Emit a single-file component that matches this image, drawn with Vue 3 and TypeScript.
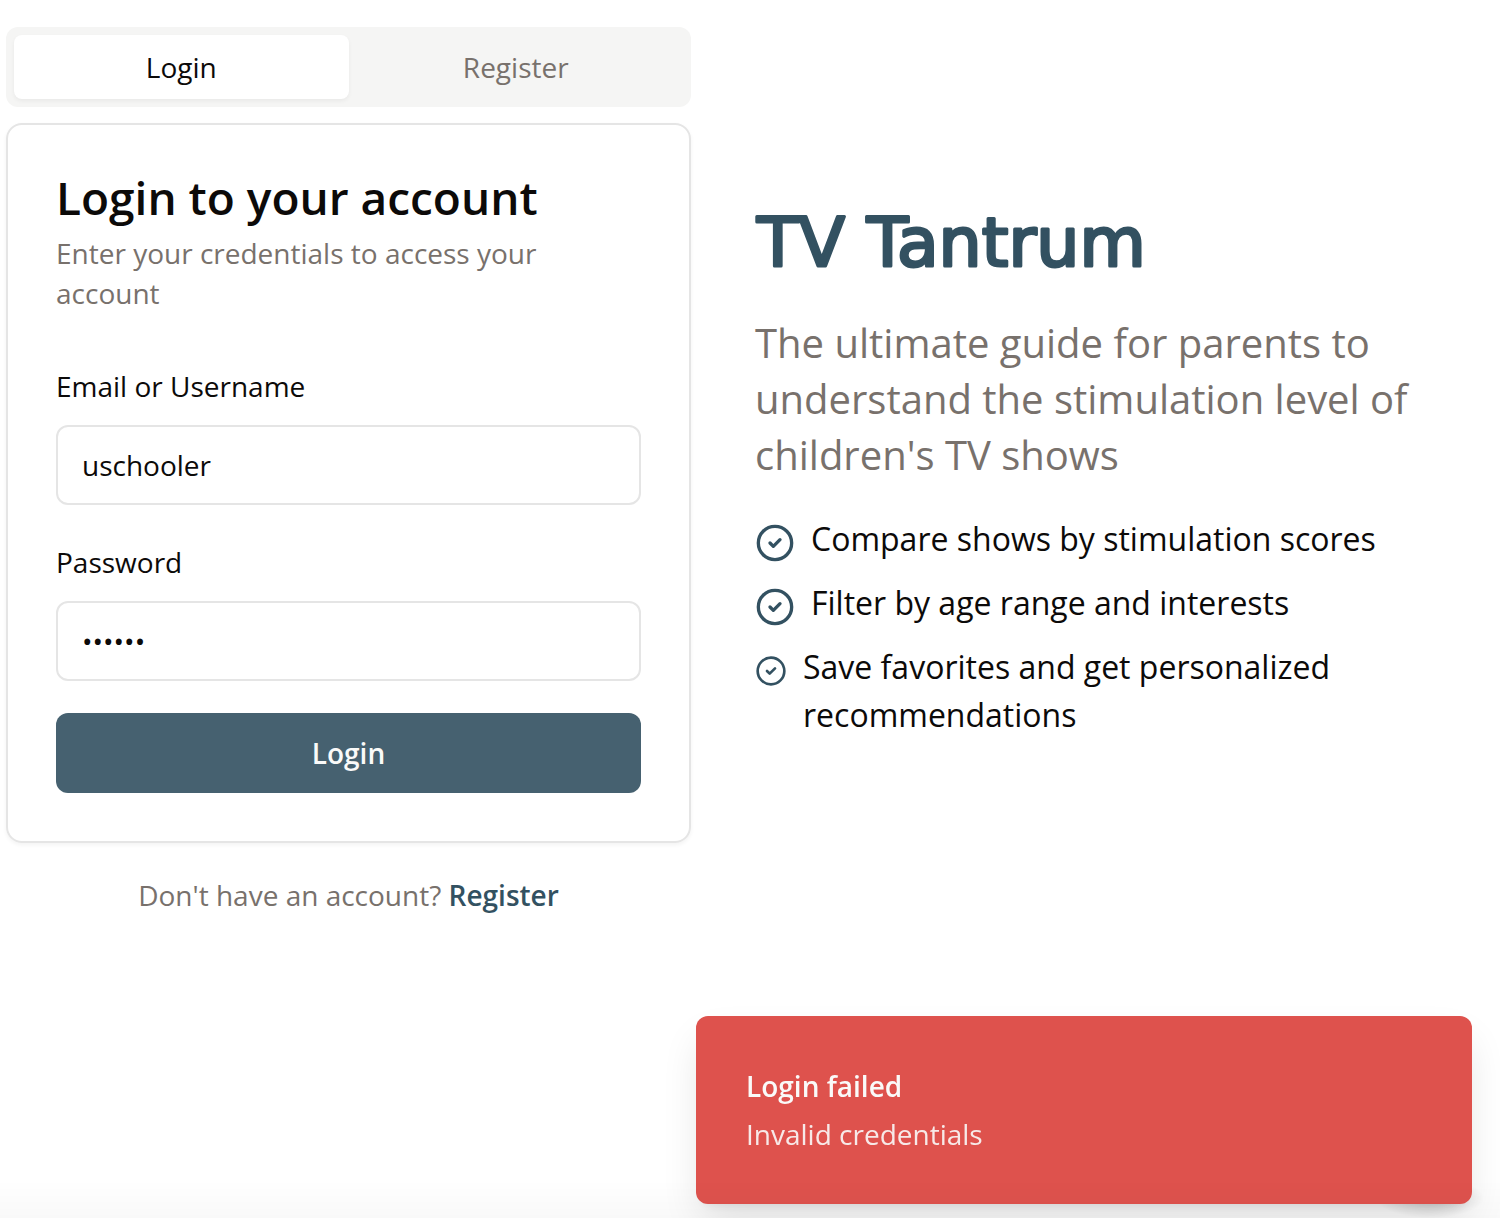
<script setup lang="ts">
import { ref } from 'vue'

type Mode = 'login' | 'register'

interface Feature {
  text: string
  compact: boolean
}

const mode = ref<Mode>('login')
const username = ref('uschooler')
const password = ref('secret')

const tabs: { id: Mode; label: string }[] = [
  { id: 'login', label: 'Login' },
  { id: 'register', label: 'Register' },
]

const features: Feature[] = [
  { text: 'Compare shows by stimulation scores', compact: false },
  { text: 'Filter by age range and interests', compact: false },
  { text: 'Save favorites and get personalized recommendations', compact: true },
]
</script>

<template>
  <main class="page">
    <section class="auth">
      <div class="tabs" role="tablist">
        <button
          v-for="tab in tabs"
          :key="tab.id"
          type="button"
          role="tab"
          class="tab"
          :class="{ active: mode === tab.id }"
          :aria-selected="mode === tab.id"
          @click="mode = tab.id"
        >
          {{ tab.label }}
        </button>
      </div>

      <div class="card">
        <header class="card-header">
          <h2 class="card-title">Login to your account</h2>
          <p class="card-description">Enter your credentials to access your account</p>
        </header>
        <form class="form" @submit.prevent>
          <div class="field">
            <label for="username">Email or Username</label>
            <input id="username" v-model="username" type="text" autocomplete="username" />
          </div>
          <div class="field">
            <label for="password">Password</label>
            <input id="password" v-model="password" type="password" autocomplete="current-password" />
          </div>
          <button type="submit" class="submit">Login</button>
        </form>
      </div>

      <p class="switch">
        Don't have an account?
        <a href="#register" @click.prevent="mode = 'register'">Register</a>
      </p>
    </section>

    <section class="hero">
      <h1 class="brand">
        <svg class="wordmark" height="72"><text x="2" y="59">TV Tantrum</text></svg>
      </h1>
      <p class="tagline">
        The ultimate guide for parents to understand the stimulation level of children's TV shows
      </p>
      <ul class="features">
        <li v-for="feature in features" :key="feature.text">
          <svg
            class="check"
            :class="{ compact: feature.compact }"
            viewBox="0 0 24 24"
            fill="none"
            stroke="currentColor"
            stroke-width="2"
            stroke-linecap="round"
            stroke-linejoin="round"
            aria-hidden="true"
          >
            <circle cx="12" cy="12" r="10" />
            <path d="m9 12 2 2 4-4" />
          </svg>
          <span>{{ feature.text }}</span>
        </li>
      </ul>
    </section>
  </main>

  <div class="corner-shade" aria-hidden="true"></div>
  <div class="toast" role="alert">
    <div class="toast-title">Login failed</div>
    <div class="toast-text">Invalid credentials</div>
  </div>
  <div class="bottom-shade" aria-hidden="true"></div>
</template>

<style>
body {
  margin: 0;
  background: #fff;
}
</style>

<style scoped>
* {
  box-sizing: border-box;
}

.page {
  display: grid;
  grid-template-columns: 1fr 1fr;
  gap: 64px;
  padding: 27px 60px 27px 6px;
  color: #0c0a09;
  font-family: "Open Sans", sans-serif;
  font-size: 28px;
  line-height: 40px;
}

h1,
h2,
p,
ul {
  margin: 0;
  padding: 0;
}

button,
input {
  font: inherit;
  color: inherit;
}

.tabs {
  display: grid;
  grid-template-columns: 1fr 1fr;
  padding: 8px;
  border-radius: 12px;
  background: #f5f5f4;
}

.tab {
  height: 64px;
  padding: 0;
  border: 0;
  border-radius: 8px;
  background: none;
  color: #78716c;
}

.tab.active {
  background: #fff;
  color: #0c0a09;
  box-shadow: 0 2px 4px rgba(0, 0, 0, 0.05);
}

.card {
  margin-top: 16px;
  padding: 48px;
  border: 2px solid #e5e5e5;
  border-radius: 16px;
  box-shadow: 0 2px 4px rgba(0, 0, 0, 0.05);
}

.card-header {
  display: flex;
  flex-direction: column;
  gap: 12px;
  margin-bottom: 48px;
}

.card-title {
  font-size: 46px;
  line-height: 48px;
  font-weight: 600;
}

.card-description {
  color: #78716c;
}

.form {
  display: flex;
  flex-direction: column;
  gap: 32px;
}

.field {
  display: flex;
  flex-direction: column;
  gap: 14px;
}

.field label {
  line-height: 50px;
}

.field input {
  width: 100%;
  height: 80px;
  padding: 0 24px;
  border: 2px solid #e5e5e5;
  border-radius: 12px;
  background: #fff;
  outline: none;
}

.submit {
  height: 80px;
  padding: 0;
  border: 0;
  border-radius: 12px;
  background: #466170;
  color: #fafaf9;
  font-weight: 600;
}

.switch {
  margin-top: 32px;
  text-align: center;
  color: #78716c;
}

.switch a {
  color: #335161;
  font-weight: 600;
  text-decoration: none;
}

.hero {
  display: flex;
  flex-direction: column;
  padding-top: 180px;
}

.brand {
  height: 72px;
  color: #335161;
  font-family: "DejaVu Sans", sans-serif;
  font-size: 68px;
  line-height: 72px;
  font-weight: 400;
}

/* A round-joined outline thickens the letters and softens their corners. */
.wordmark {
  display: block;
  width: 100%;
  overflow: visible;
  fill: currentColor;
  stroke: currentColor;
  stroke-width: 3px;
  stroke-linejoin: round;
}

.tagline {
  margin-top: 36px;
  color: #78716c;
  font-size: 40px;
  line-height: 56px;
}

.features {
  display: flex;
  flex-direction: column;
  gap: 16px;
  margin-top: 32px;
  list-style: none;
  font-size: 32px;
  line-height: 48px;
}

.features li {
  display: flex;
  align-items: flex-start;
  gap: 16px;
}

.check {
  flex: none;
  width: 40px;
  height: 40px;
  margin-top: 8px;
  color: #335161;
}

.check.compact {
  width: 32px;
}

.toast {
  position: fixed;
  right: 28px;
  bottom: 14px;
  width: 776px;
  padding: 50px;
  border-radius: 12px;
  background: #de524d;
  color: #fafaf9;
  font-family: "Open Sans", sans-serif;
  font-size: 28px;
  line-height: 40px;
  box-shadow: 0 20px 40px -6px rgba(0, 0, 0, 0.12), 0 8px 12px -8px rgba(0, 0, 0, 0.1);
}

.toast-title {
  font-weight: 600;
}

.toast-text {
  margin-top: 8px;
  opacity: 0.9;
}

.corner-shade {
  position: fixed;
  right: 16px;
  bottom: 0;
  width: 108px;
  height: 40px;
  background: radial-gradient(closest-side, rgba(0, 0, 0, 0.18), rgba(0, 0, 0, 0));
}

.bottom-shade {
  position: fixed;
  right: 0;
  bottom: 0;
  left: 0;
  height: 38px;
  background: linear-gradient(rgba(0, 0, 0, 0), rgba(0, 0, 0, 0.024));
  pointer-events: none;
}
</style>
